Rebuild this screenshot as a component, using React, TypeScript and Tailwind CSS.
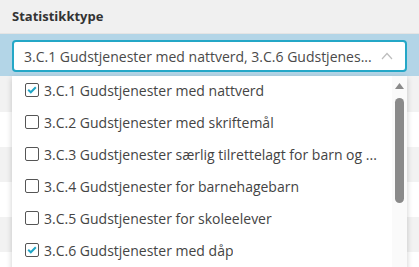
import React from "react";

const items = [
  { label: "3.C.1 Gudstjenester med nattverd", checked: true },
  { label: "3.C.2 Gudstjenester med skriftemål", checked: false },
  { label: "3.C.3 Gudstjenester særlig tilrettelagt for barn og ...", checked: false },
  { label: "3.C.4 Gudstjenester for barnehagebarn", checked: false },
  { label: "3.C.5 Gudstjenester for skoleelever", checked: false },
  { label: "3.C.6 Gudstjenester med dåp", checked: true },
];

function Checkbox({ checked }: { checked: boolean }) {
  return (
    <div className="w-[14px] h-[14px] shrink-0 border border-[#555] rounded-[2px] bg-white flex items-center justify-center">
      {checked && (
        <svg width="10" height="8" viewBox="0 0 10 8">
          <path d="M1.2 3.8 L3.8 6.3 L8.8 1.2" fill="none" stroke="#1ea5c6" strokeWidth="2" />
        </svg>
      )}
    </div>
  );
}

export default function App() {
  return (
    <div
      className="relative w-[419px] h-[267px] overflow-hidden bg-white"
      style={{ fontFamily: '"Open Sans", "Liberation Sans", sans-serif' }}
    >
      <div className="h-[34px] bg-[#f0f0f0] border-b border-[#e4e4e4] px-3 flex items-center">
        <span className="text-[13px] font-bold text-[#333]">Statistikktype</span>
      </div>
      <div className="h-[42px] bg-[#b3d5e7] px-3 pt-[6px]">
        <div className="h-[32px] w-[395px] bg-white border-2 border-[#24a7c7] rounded-[4px] flex items-center pl-[10px] pr-[10px]">
          <span className="flex-1 min-w-0 whitespace-nowrap overflow-hidden text-[14px] text-[#4a4a4a]">
            3.C.1 Gudstjenester med nattverd, 3.C.6 Gudstjenes...
          </span>
          <svg width="12" height="8" viewBox="0 0 12 8" className="ml-[8px] mr-[2px] shrink-0">
            <path d="M1 7 L6 1.5 L11 7" fill="none" stroke="#bdbdbd" strokeWidth="1.2" />
          </svg>
        </div>
      </div>
      <div className="flex flex-col">
        <div className="h-[36px] bg-[#f2f2f2]" />
        <div className="h-[35px] bg-white" />
        <div className="h-[35px] bg-[#f2f2f2]" />
        <div className="h-[35px] bg-white" />
        <div className="h-[35px] bg-[#f2f2f2]" />
        <div className="h-[35px] bg-white" />
      </div>

      <div className="absolute left-[12px] top-[76px] w-[395px] h-[220px] bg-white shadow-[0_2px_6px_rgba(0,0,0,0.2)] flex">
        <div className="flex-1 min-w-0 flex flex-col -mt-[2px]">
          {items.map((it) => (
            <div key={it.label} className="h-[32px] flex items-center pl-[13px] pr-[8px]">
              <Checkbox checked={it.checked} />
              <span className="ml-[5px] whitespace-nowrap overflow-hidden text-[14px] text-[#444]">{it.label}</span>
            </div>
          ))}
        </div>
        <div className="w-[15px] shrink-0 bg-[#fafafa] flex flex-col items-center pt-[7px]">
          <svg width="9" height="6" viewBox="0 0 9 6">
            <path d="M0 6 L4.5 0 L9 6 Z" fill="#8a8a8a" />
          </svg>
          <div className="mt-[9px] w-[9px] h-[105px] rounded-full bg-[#8a8a8a]" />
        </div>
      </div>
    </div>
  );
}
